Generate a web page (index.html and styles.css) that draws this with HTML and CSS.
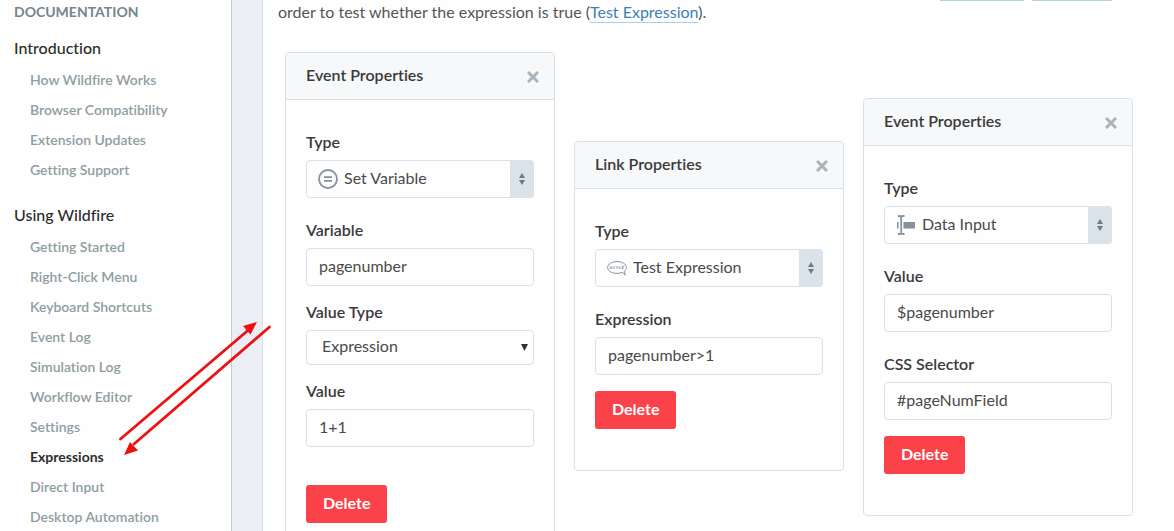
FILE: index.html
```html
<!DOCTYPE html>
<html lang="en">
<head>
<meta charset="utf-8">
<title>Expressions - Documentation</title>
<link rel="stylesheet" href="styles.css">
</head>
<body>
<div class="page">
  <nav class="sidebar">
    <h2 class="sidebar-title">DOCUMENTATION</h2>
    <h3 class="sidebar-group">Introduction</h3>
    <ul class="sidebar-list">
      <li><a href="#">How Wildfire Works</a></li>
      <li><a href="#">Browser Compatibility</a></li>
      <li><a href="#">Extension Updates</a></li>
      <li><a href="#">Getting Support</a></li>
    </ul>
    <h3 class="sidebar-group">Using Wildfire</h3>
    <ul class="sidebar-list">
      <li><a href="#">Getting Started</a></li>
      <li><a href="#">Right-Click Menu</a></li>
      <li><a href="#">Keyboard Shortcuts</a></li>
      <li><a href="#">Event Log</a></li>
      <li><a href="#">Simulation Log</a></li>
      <li><a href="#">Workflow Editor</a></li>
      <li><a href="#">Settings</a></li>
      <li><a href="#" class="current">Expressions</a></li>
      <li><a href="#">Direct Input</a></li>
      <li><a href="#">Desktop Automation</a></li>
    </ul>
  </nav>

  <main class="content">
    <div class="link-rules"><span class="rule-long"></span><span class="rule-short"></span></div>
    <p class="intro">order to test whether the expression is true (<a href="#">Test Expression</a>).</p>

    <div class="cards">
      <section class="card card-tall">
        <header class="card-head"><h4>Event Properties</h4>
          <button class="close" aria-label="Close"><svg width="12" height="12" viewBox="0 0 12 12"><path d="M1 1 11 11M11 1 1 11"/></svg></button></header>
        <div class="card-body">
          <div class="field">
            <label for="type-a">Type</label>
            <div class="picker">
              <svg class="picker-icon" width="20" height="20" viewBox="0 0 20 20"><g fill="none" stroke="#87929d"><circle cx="10" cy="10" r="9" stroke-width="1.8"/><path d="M6 8.200h8M6 11.800h8" stroke-width="1.8"/></g></svg>
              <select id="type-a"><option>Set Variable</option></select>
              <span class="picker-arrows"><svg width="6" height="12" viewBox="0 0 6 12"><path d="M3 0 6 5H0zM3 12 0 7h6z"/></svg></span>
            </div>
          </div>
          <div class="field">
            <label for="variable">Variable</label>
            <input id="variable" type="text" value="pagenumber">
          </div>
          <div class="field field-near">
            <label for="value-type">Value Type</label>
            <div class="picker picker-plain">
              <select id="value-type"><option>Expression</option></select>
              <svg class="caret" width="7" height="7" viewBox="0 0 7 7"><path d="M0 0h7L3.500 7z"/></svg>
            </div>
          </div>
          <div class="field field-near">
            <label for="value-a">Value</label>
            <input id="value-a" type="text" value="1+1">
          </div>
          <button class="delete delete-far">Delete</button>
        </div>
      </section>

      <section class="card card-low">
        <header class="card-head"><h4>Link Properties</h4>
          <button class="close" aria-label="Close"><svg width="12" height="12" viewBox="0 0 12 12"><path d="M1 1 11 11M11 1 1 11"/></svg></button></header>
        <div class="card-body">
          <div class="field">
            <label for="type-b">Type</label>
            <div class="picker">
              <svg class="picker-icon" width="20" height="20" viewBox="0 0 20 20"><g fill="none" stroke="#87929d"><path d="M15.500 14.200C14 15 12 15.400 10 15.400 4.800 15.400.6 12.900.6 9.500S4.800 3.600 10 3.600s9.400 2.500 9.400 5.900c0 1.500-.8 2.700-2 3.700l.8 3.900z" stroke-width="1"/><path d="M3 8.300l2.200 2.600M5.200 8.300 3 10.900M6.300 9h1.600M6.300 10.300h1.600M9 8.300l1 1.200 1-1.200M10 9.500v1.400M11.800 9.600h1.800M12.700 8.700v1.800M14.600 8.400h2.200l-2.200 2.400h2.200" stroke-width=".9"/></g></svg>
              <select id="type-b"><option>Test Expression</option></select>
              <span class="picker-arrows"><svg width="6" height="12" viewBox="0 0 6 12"><path d="M3 0 6 5H0zM3 12 0 7h6z"/></svg></span>
            </div>
          </div>
          <div class="field">
            <label for="expression">Expression</label>
            <input id="expression" type="text" value="pagenumber&gt;1">
          </div>
          <button class="delete">Delete</button>
        </div>
      </section>

      <section class="card card-mid">
        <header class="card-head"><h4>Event Properties</h4>
          <button class="close" aria-label="Close"><svg width="12" height="12" viewBox="0 0 12 12"><path d="M1 1 11 11M11 1 1 11"/></svg></button></header>
        <div class="card-body">
          <div class="field">
            <label for="type-c">Type</label>
            <div class="picker">
              <svg class="picker-icon" width="20" height="20" viewBox="0 0 20 20"><path d="M7.500 7h11.500v6.500H7.500zM1 7h1.500v6.500H1z" fill="#87929d"/><path d="M2 1h1.700Q5.200 1 5.200 2.500 5.200 1 6.700 1H8.500M5.200 2v16M2 19h1.700q1.500 0 1.500-1.500 0 1.500 1.500 1.500H8.500" fill="none" stroke="#87929d" stroke-width="1.800"/></svg>
              <select id="type-c"><option>Data Input</option></select>
              <span class="picker-arrows"><svg width="6" height="12" viewBox="0 0 6 12"><path d="M3 0 6 5H0zM3 12 0 7h6z"/></svg></span>
            </div>
          </div>
          <div class="field">
            <label for="value-c">Value</label>
            <input id="value-c" type="text" value="$pagenumber">
          </div>
          <div class="field">
            <label for="selector">CSS Selector</label>
            <input id="selector" type="text" value="#pageNumField">
          </div>
          <button class="delete">Delete</button>
        </div>
      </section>
    </div>
  </main>

  <svg class="arrows" width="156" height="136" viewBox="0 0 156 136">
    <g stroke="#ee1111" stroke-width="2.800" stroke-linecap="round"><path d="M5.500 119 134 9.500M154.500 7 19 124"/></g>
    <path d="M142 2 135.500 14.500 128 6zM9 135 15 122 23 130.500z" fill="#ee1111"/>
  </svg>
</div>
</body>
</html>
```
FILE: styles.css
```css
* { box-sizing: border-box; }

body {
  margin: 0;
  color: #3a3a3a;
  font-family: Lato, "Liberation Sans", sans-serif;
  font-size: 16px;
  font-variant-ligatures: none;
  line-height: 20px;
}

h2, h3, h4, p, ul { margin: 0; padding: 0; }
ul { list-style: none; }

.page {
  position: relative;
  display: flex;
  height: 100vh;
  overflow: hidden;
  background: #ebeef4;
}

.sidebar {
  flex: 0 0 232px;
  padding: 2px 14px 0;
  border-right: 1px solid #c5ced6;
  background: #fefefe;
}
.sidebar-title {
  margin-bottom: 14px;
  color: #77848a;
  font-size: 14px;
  font-weight: 700;
}
.sidebar-group {
  color: #2d2d2d;
  font-size: 16px;
  font-weight: 500;
  line-height: 24px;
}
.sidebar-list {
  padding: 5px 0 18px 16px;
  font-size: 14px;
  font-weight: 600;
  line-height: 30px;
}
.sidebar-list a { color: #8f9da1; text-decoration: none; }
.sidebar-list .current { color: #2d2d2d; font-weight: 700; }

.content {
  position: relative;
  flex: 1;
  margin-left: 30px;
  padding: 2px 41px 0 15px;
  border-left: 1px solid #d8dfe4;
  background: #fefefe;
}

.link-rules {
  position: absolute;
  top: 0;
  right: 62px;
  display: flex;
  gap: 8px;
}
.link-rules span { height: 1px; background: #b4d3d8; }
.rule-long { width: 84px; }
.rule-short { width: 80px; }

.intro { color: #555; white-space: nowrap; }
.intro a {
  padding-bottom: 1px;
  border-bottom: 1px solid #a9cfe4;
  color: #3a7fba;
  text-decoration: none;
}

.cards {
  display: grid;
  grid-template-columns: repeat(3, 1fr);
  align-items: start;
  gap: 19px;
  padding: 30px 0 0 7px;
}
.card {
  border: 1px solid #dae1e6;
  border-radius: 4px;
}
.card-low { margin-top: 89px; }
.card-mid { margin-top: 46px; }
.card-head {
  display: flex;
  align-items: center;
  justify-content: space-between;
  height: 47px;
  padding: 0 15px 2px 20px;
  border-bottom: 1px solid #dae1e6;
  border-radius: 4px 4px 0 0;
  background: #f6f8fa;
}
.card-head h4 { font-size: 16px; font-weight: 600; }
.close {
  display: flex;
  padding: 3px 0 0;
  border: 0;
  background: none;
}
.close path { stroke: #a9b4bc; stroke-width: 3; }
.card-body { padding: 32px 20px 41px; }

.field + .field { margin-top: 22px; }
.field + .field-near { margin-top: 16px; }
.field label {
  display: block;
  margin-bottom: 8px;
  font-weight: 600;
}
input, select {
  display: block;
  width: 100%;
  height: 38px;
  padding: 0 12px 3px;
  border: 1px solid #dae1e6;
  border-radius: 4px;
  background: #fefefe;
  color: #4a4a4a;
  font: inherit;
}
select { appearance: none; }
.picker { position: relative; }
.picker select { padding-left: 37px; }
.picker-icon { position: absolute; top: 9px; left: 12px; }
.picker-arrows {
  position: absolute;
  top: 0;
  right: 0;
  bottom: 0;
  display: flex;
  align-items: center;
  justify-content: center;
  width: 24px;
  border-radius: 0 4px 4px 0;
  background: #dae2ea;
}
.picker-arrows path { fill: #707a84; }
.picker.picker-plain select { height: 35px; padding-left: 15px; }
.caret { position: absolute; top: 14px; right: 6px; fill: #333; }

.delete {
  display: block;
  height: 38px;
  margin-top: 16px;
  padding: 0 17px 2px;
  border: 0;
  border-radius: 3px;
  background: #fb414a;
  color: #fefefe;
  font: inherit;
  font-weight: 700;
}
.delete-far { margin-top: 38px; }

.arrows { position: absolute; top: 320px; left: 115px; }
```
